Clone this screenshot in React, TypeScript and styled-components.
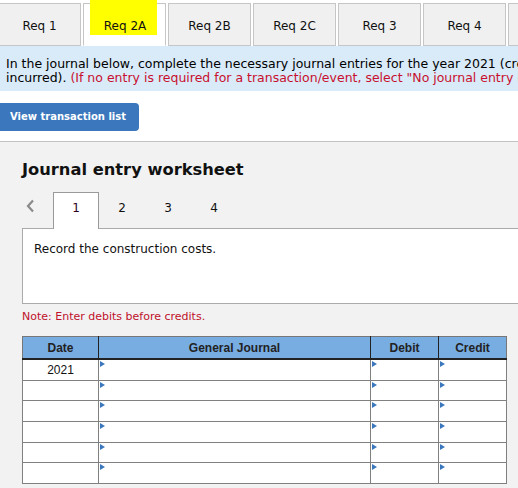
import React, { FC } from 'react'
import styled, { createGlobalStyle } from 'styled-components'

const GlobalStyle = createGlobalStyle`
    html, body {
        margin: 0;
        padding: 0;
        background: #ffffff;
        overflow: hidden;
        font-family: "DejaVu Sans", Verdana, sans-serif;
    }
`

const StyledPage = styled.div`
    width: 518px;
    height: 488px;
    overflow: hidden;
    display: flex;
    flex-direction: column;
`
const StyledReqBar = styled.div`
    display: flex;
    gap: 2px;
    padding-top: 3px;
    margin-left: -2px;
    height: 46px;
    box-sizing: border-box;
    position: relative;
    z-index: 1;
`
const StyledReqTab = styled.div<{ $active?: boolean }>`
    flex: 0 0 83px;
    box-sizing: border-box;
    height: 43px;
    border: 1px solid #c6c6c6;
    border-bottom: ${props => props.$active ? '1px solid #ffffff' : '1px solid #c6c6c6'};
    background: ${props => props.$active ? '#ffffff' : '#f0f0f0'};
    display: flex;
    align-items: ${props => props.$active ? 'flex-start' : 'center'};
    justify-content: ${props => props.$active ? 'flex-start' : 'center'};
    font-size: 12px;
    color: #111;
    padding-top: ${props => props.$active ? '0' : '2px'};
`
const StyledMarked = styled.span`
    flex: 0 0 67px;
    height: 35px;
    margin: -4px 0 0 6px;
    box-sizing: border-box;
    background: #ffff00;
    display: flex;
    align-items: flex-end;
    justify-content: center;
    padding: 0 0 2px 3px;
`
const StyledInstructions = styled.div`
    background: #d9eaf8;
    padding: 11px 6px 6px;
    font-size: 12.5px;
    line-height: 14px;
    color: #000;
    white-space: nowrap;
    overflow: hidden;
`
const StyledRed = styled.span`
    color: #c8102e;
`
const StyledViewButton = styled.button`
    align-self: flex-start;
    margin-top: 12px;
    width: 139px;
    height: 28px;
    border: none;
    border-radius: 0 4px 4px 0;
    background: #3a77bd;
    color: #ffffff;
    font-family: "DejaVu Sans", Verdana, sans-serif;
    font-weight: bold;
    font-size: 10px;
    text-align: left;
    padding: 0 0 1px 10px;
`
const StyledWorksheet = styled.section`
    margin-top: 10px;
    flex: 1;
    background: #f2f2f2;
    border-top: 1px solid #c3c3c3;
    padding: 18px 0 0 22px;
`
const StyledTitle = styled.h2`
    margin: 0;
    font-size: 16.3px;
    font-weight: bold;
    color: #111;
    line-height: 20px;
`
const StyledStepBar = styled.div`
    display: flex;
    align-items: flex-end;
    margin-top: 11px;
    height: 37px;
`
const StyledChevron = styled.div`
    width: 31px;
    height: 36px;
    display: flex;
    align-items: center;
    padding-left: 4px;
    padding-bottom: 8px;
    box-sizing: border-box;
`
const StyledStep = styled.div<{ $active?: boolean }>`
    width: 46px;
    height: 37px;
    box-sizing: border-box;
    display: flex;
    align-items: center;
    justify-content: center;
    padding-bottom: 6px;
    font-size: 12px;
    color: ${props => props.$active ? '#2a0020' : '#111'};
    background: ${props => props.$active ? '#ffffff' : 'transparent'};
    border: 1px solid ${props => props.$active ? '#9a9a9a' : 'transparent'};
    border-bottom: none;
    margin-bottom: -1px;
    position: relative;
    z-index: 1;
`
const StyledEntryBox = styled.div`
    background: #ffffff;
    border: 1px solid #ababab;
    margin-right: -4px;
    height: 76px;
    box-sizing: border-box;
    padding: 13px 11px;
    font-size: 12px;
    color: #111;
`
const StyledNote = styled.div`
    margin-top: 6px;
    font-size: 11px;
    color: #c0102a;
    line-height: 13px;
`
const StyledTable = styled.table`
    margin-top: 13px;
    width: 480px;
    border-collapse: collapse;
    border: 1px solid #777;
    font-family: "Liberation Sans", Arial, sans-serif;
    font-size: 12px;
    table-layout: fixed;
`
const StyledTh = styled.th<{ $w: number }>`
    width: ${props => props.$w}px;
    height: 21px;
    padding: 0;
    background: #78ade2;
    color: #222;
    font-weight: bold;
    border-left: 1px solid #222;
    border-bottom: 2px solid #222;
    &:first-child { border-left: none; }
`
const StyledTd = styled.td`
    position: relative;
    height: 19.7px;
    padding: 0;
    background: #ffffff;
    border: 1px solid #808080;
    text-align: center;
    color: #111;
`
const StyledMarker = styled.span`
    position: absolute;
    top: 1px;
    left: 1px;
    width: 0;
    height: 0;
    border-top: 3px solid transparent;
    border-bottom: 3px solid transparent;
    border-left: 5px solid #3a77bd;
`

const reqs = ['Req 1', 'Req 2A', 'Req 2B', 'Req 2C', 'Req 3', 'Req 4', '']

const Chevron: FC = () => (
    <svg width="9" height="14" viewBox="0 0 9 14">
        <path d="M7 1.5 L2 7 L7 12.5" fill="none" stroke="#8a8a8a" strokeWidth="2.2" />
    </svg>
)

const App: FC = () => {
    const rows = [0, 1, 2, 3, 4, 5]
    return (
        <StyledPage>
            <GlobalStyle />
            <StyledReqBar>
                {reqs.map(r => (
                    <StyledReqTab key={r} $active={r === 'Req 2A'}>
                        {r === 'Req 2A' ? <StyledMarked>{r}</StyledMarked> : r}
                    </StyledReqTab>
                ))}
            </StyledReqBar>
            <StyledInstructions>
                In the journal below, complete the necessary journal entries for the year 2021 (credit "Construction in progress" for construction costs<br />
                incurred). <StyledRed>(If no entry is required for a transaction/event, select "No journal entry required" in the first account field.)</StyledRed>
            </StyledInstructions>
            <StyledViewButton>View transaction list</StyledViewButton>
            <StyledWorksheet>
                <StyledTitle>Journal entry worksheet</StyledTitle>
                <StyledStepBar>
                    <StyledChevron><Chevron /></StyledChevron>
                    <StyledStep $active>1</StyledStep>
                    <StyledStep>2</StyledStep>
                    <StyledStep>3</StyledStep>
                    <StyledStep>4</StyledStep>
                </StyledStepBar>
                <StyledEntryBox>Record the construction costs.</StyledEntryBox>
                <StyledNote>Note: Enter debits before credits.</StyledNote>
                <StyledTable>
                    <thead>
                        <tr>
                            <StyledTh $w={75}>Date</StyledTh>
                            <StyledTh $w={271}>General Journal</StyledTh>
                            <StyledTh $w={67}>Debit</StyledTh>
                            <StyledTh $w={67}>Credit</StyledTh>
                        </tr>
                    </thead>
                    <tbody>
                        {rows.map(i => (
                            <tr key={i}>
                                <StyledTd>{i === 0 ? '2021' : ''}</StyledTd>
                                <StyledTd><StyledMarker /></StyledTd>
                                <StyledTd><StyledMarker /></StyledTd>
                                <StyledTd><StyledMarker /></StyledTd>
                            </tr>
                        ))}
                    </tbody>
                </StyledTable>
            </StyledWorksheet>
        </StyledPage>
    )
}

export default App
